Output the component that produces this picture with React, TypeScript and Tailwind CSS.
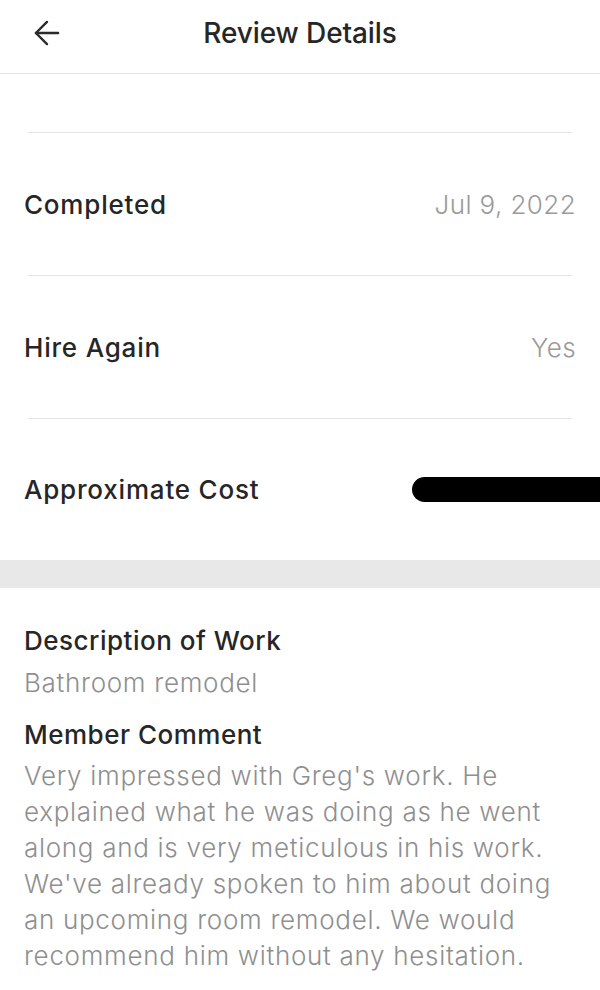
import { ArrowLeft } from 'lucide-react'

const rows = [
  { label: 'Completed', value: 'Jul 9, 2022' },
  { label: 'Hire Again', value: 'Yes' },
]

const comment = [
  "Very impressed with Greg's work. He",
  'explained what he was doing as he went',
  'along and is very meticulous in his work.',
  "We've already spoken to him about doing",
  'an upcoming room remodel. We would',
  'recommend him without any hesitation.',
]

export default function App() {
  return (
    <div className="w-[600px] min-h-[990px] bg-white font-['Inter',sans-serif] text-[#262626]">
      <header className="relative flex h-[74px] items-center justify-center border-b border-[#e6e6e6]">
        <button className="absolute left-[28px] top-[14px] text-[#2a2a2a]">
          <ArrowLeft className="h-[38px] w-[38px]" strokeWidth={1.5} />
        </button>
        <h1 className="-mt-[8px] text-[28px] font-medium tracking-[-0.1px]">Review Details</h1>
      </header>

      <div className="h-[58px]" />

      <div className="px-[24px]">
        {rows.map((row) => (
          <div key={row.label}>
            <div className="mx-[4px] border-t border-[#e5e5e5]" />
            <div className="flex h-[142px] items-center justify-between">
              <span className="text-[26px] font-medium tracking-[0.8px]">{row.label}</span>
              <span className="text-[26px] font-light tracking-[0.4px] text-[#9a9a9a]">{row.value}</span>
            </div>
          </div>
        ))}
        <div className="mx-[4px] border-t border-[#e5e5e5]" />
        <div className="flex h-[141px] items-center justify-between">
          <span className="text-[26px] font-medium tracking-[0.8px]">Approximate Cost</span>
          <span className="-mr-[26px] h-[25px] w-[190px] rounded-l-full bg-black" />
        </div>
      </div>

      <div className="h-[28px] bg-[#e8e8e8]" />

      <section className="px-[24px] pt-[35px]">
        <h2 className="text-[26px] font-medium leading-[36px] tracking-[0.5px]">Description of Work</h2>
        <p className="mt-[6px] text-[26px] font-light leading-[36px] tracking-[0.7px] text-[#8f8f8f]">Bathroom remodel</p>
        <h2 className="mt-[16px] text-[26px] font-medium leading-[36px] tracking-[0.5px]">Member Comment</h2>
        <p className="mt-[5px] text-[26px] font-light leading-[36px] tracking-[0.7px] text-[#8f8f8f]">
          {comment.map((line) => (
            <span key={line} className="block whitespace-nowrap">
              {line}
            </span>
          ))}
        </p>
      </section>
    </div>
  )
}
